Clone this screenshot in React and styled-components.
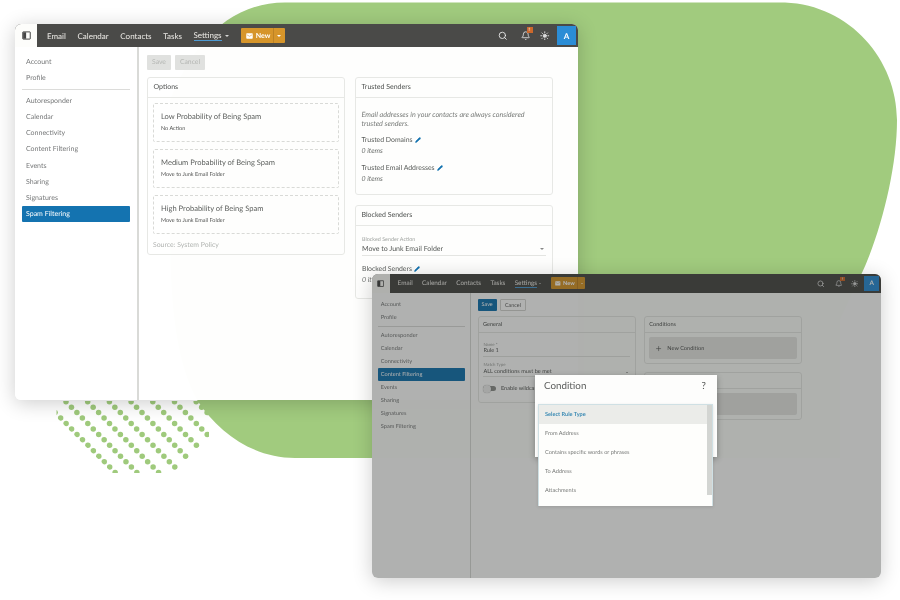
import React from 'react';
import styled, { createGlobalStyle } from 'styled-components';
import { Search, Bell, Sun, Plus, Pencil } from 'lucide-react';

const Global = createGlobalStyle`
  html, body { margin: 0; padding: 0; background: #fff; }
  body { font-family: Lato, "Open Sans", "Liberation Sans", sans-serif; text-rendering: geometricPrecision; }
`;

const Stage = styled.div`
  position: relative;
  width: 900px;
  height: 600px;
  overflow: hidden;
  background: #fff;
`;
const Backdrop = styled.svg`
  position: absolute;
  inset: 0;
`;

const Win = styled.div`
  --u: ${p => p.$u}px;
  position: absolute;
  left: ${p => p.$x}px;
  top: ${p => p.$y}px;
  width: ${p => p.$w}px;
  height: ${p => p.$h}px;
  border-radius: 6px;
  background: rgba(255, 255, 255, 0.985);
  box-shadow: 0 3px 20px rgba(0, 0, 0, 0.2);
  display: flex;
  flex-direction: column;
  filter: blur(0.3px);
`;
const Chrome = styled.div`
  display: flex;
  flex-direction: column;
  flex: 1;
  min-height: 0;
  overflow: hidden;
  border-radius: 6px;
`;
const TopBar = styled.header`
  flex: none;
  height: calc(var(--u) * 23.4);
  display: flex;
  align-items: center;
  background: #4a4a48;
  color: #f2f2f0;
`;
const PanelCell = styled.div`
  flex: none;
  width: calc(var(--u) * 22);
  height: 100%;
  background: #fdfdfb;
  display: flex;
  align-items: center;
  justify-content: center;
  svg { width: calc(var(--u) * 9); height: calc(var(--u) * 9); }
`;
const Nav = styled.nav`
  display: flex;
  align-items: center;
  gap: calc(var(--u) * 11.6);
  padding-left: calc(var(--u) * 10);
  font-size: calc(var(--u) * 8);
`;
const NavLink = styled.span`
  color: #eceae6;
  ${p => p.$on && `
    border-bottom: 1px solid #4d9ad2;
    line-height: 1.15;
    margin-top: 1px;
  `}
`;
const Caret = styled.i`
  display: inline-block;
  border-left: calc(var(--u) * 2) solid transparent;
  border-right: calc(var(--u) * 2) solid transparent;
  border-top: calc(var(--u) * 2) solid ${p => p.$c || '#d8d8d6'};
  vertical-align: middle;
`;
const SettingsItem = styled.span`
  display: flex;
  align-items: center;
  gap: calc(var(--u) * 3);
`;
const NewBtn = styled.div`
  margin-left: calc(var(--u) * 0.5);
  display: flex;
  align-items: stretch;
  height: calc(var(--u) * 15);
  background: #d6952a;
  border-radius: 1px;
  color: #fff;
  font-weight: 700;
  font-size: calc(var(--u) * 7);
`;
const NewMain = styled.span`
  display: flex;
  align-items: center;
  gap: calc(var(--u) * 3);
  padding: 0 calc(var(--u) * 2.5) 0 calc(var(--u) * 5);
  svg { width: calc(var(--u) * 7); height: calc(var(--u) * 6); }
`;
const NewDrop = styled.span`
  display: flex;
  align-items: center;
  padding: 0 calc(var(--u) * 3.5);
  border-left: 1px solid #bd8224;
`;
const Tools = styled.div`
  margin-left: auto;
  display: flex;
  align-items: center;
  gap: calc(var(--u) * 10);
  padding-right: calc(var(--u) * 2);
  color: #eee;
  svg { display: block; }
`;
const BellWrap = styled.span`
  position: relative;
  display: block;
  margin-left: calc(var(--u) * 3);
`;
const Badge = styled.b`
  position: absolute;
  top: calc(var(--u) * -3.5);
  right: calc(var(--u) * -2.5);
  width: calc(var(--u) * 6);
  height: calc(var(--u) * 5.5);
  background: #cc682c;
  color: #fff;
  font-size: calc(var(--u) * 4.5);
  line-height: calc(var(--u) * 5.5);
  text-align: center;
`;
const Avatar = styled.div`
  width: calc(var(--u) * 19);
  height: calc(var(--u) * 19);
  margin-left: calc(var(--u) * -2.5);
  background: #2b8dd6;
  color: #fff;
  font-weight: 700;
  font-size: calc(var(--u) * 8);
  display: flex;
  align-items: center;
  justify-content: center;
`;
const Body = styled.div`
  flex: 1;
  display: flex;
  min-height: 0;
`;
const Side = styled.aside`
  flex: none;
  width: calc(var(--u) * 124);
  box-sizing: border-box;
  padding: calc(var(--u) * 6.7) calc(var(--u) * 7);
  border-right: calc(var(--u) * 2) solid #d9dad7;
  font-size: calc(var(--u) * 7);
`;
const SideItem = styled.div`
  height: calc(var(--u) * 16.2);
  line-height: calc(var(--u) * 17.8);
  padding-left: calc(var(--u) * 4);
  color: ${p => (p.$on ? '#fff' : '#77797a')};
  background: ${p => (p.$on ? '#1473b0' : 'transparent')};
  border-radius: 1px;
`;
const SideRule = styled.hr`
  border: 0;
  border-top: 1px solid #dcdcda;
  margin: calc(var(--u) * 3) 0 calc(var(--u) * 2.4);
`;
const Main = styled.main`
  flex: 1;
  min-width: 0;
  padding: calc(var(--u) * 7.7) calc(var(--u) * 8);
`;
const Actions = styled.div`
  display: flex;
  gap: calc(var(--u) * 4);
  margin-bottom: calc(var(--u) * 7);
`;
const ActBtn = styled.button`
  all: unset;
  box-sizing: border-box;
  height: calc(var(--u) * 15);
  padding: 0 calc(var(--u) * 5);
  font-size: calc(var(--u) * 6.8);
  line-height: calc(var(--u) * 15);
  border-radius: 1px;
  color: ${p => ({ off: '#b4b6b3', primary: '#fff', plain: '#666' })[p.$kind]};
  background: ${p => ({ off: '#e0e1df', primary: '#1473b0', plain: 'transparent' })[p.$kind]};
  border: ${p => (p.$kind === 'plain' ? '1px solid #d4d4d2' : '0')};
`;
const Columns = styled.div`
  display: grid;
  grid-template-columns: calc(var(--u) * 197.5) calc(var(--u) * 197.5);
  gap: calc(var(--u) * 10.5);
  align-items: start;
`;
const Stack = styled.div`
  display: flex;
  flex-direction: column;
  gap: calc(var(--u) * 10.5);
`;
const Card = styled.section`
  border: 1px solid #e7e8e5;
  border-radius: 3px;
  box-sizing: border-box;
`;
const CardHead = styled.h3`
  margin: 0;
  box-sizing: border-box;
  height: calc(var(--u) * 20);
  line-height: calc(var(--u) * 19);
  padding-left: calc(var(--u) * 5.5);
  font-size: calc(var(--u) * 7);
  font-weight: 400;
  color: #4f5150;
  border-bottom: 1px solid #e7e8e5;
`;
const OptionsBody = styled.div`
  padding: calc(var(--u) * 5) calc(var(--u) * 5) calc(var(--u) * 3.5);
`;
const RuleBox = styled.div`
  box-sizing: border-box;
  height: calc(var(--u) * 39);
  padding: calc(var(--u) * 6.5) calc(var(--u) * 7);
  margin-bottom: calc(var(--u) * 7);
  border: 1px dashed #d9dad7;
  border-radius: 2px;
`;
const RuleTitle = styled.div`
  font-size: calc(var(--u) * 7.55);
  line-height: calc(var(--u) * 12);
  color: #5d5f5e;
`;
const RuleSub = styled.div`
  margin-top: calc(var(--u) * 1);
  font-size: calc(var(--u) * 5.5);
  line-height: calc(var(--u) * 10);
  color: #555;
`;
const Source = styled.div`
  margin-top: calc(var(--u) * -1);
  font-size: calc(var(--u) * 6.9);
  line-height: calc(var(--u) * 10);
  color: #b0b2b0;
`;
const TrustBody = styled.div`
  padding: calc(var(--u) * 11.5) calc(var(--u) * 5.5) calc(var(--u) * 9);
`;
const Note = styled.p`
  margin: 0;
  font-style: italic;
  font-size: calc(var(--u) * 7.2);
  line-height: calc(var(--u) * 9);
  color: #797b7a;
`;
const ListLabel = styled.div`
  margin-top: calc(var(--u) * ${p => p.$mt ?? 6});
  display: flex;
  align-items: center;
  gap: calc(var(--u) * 2.5);
  font-size: calc(var(--u) * 6.9);
  line-height: calc(var(--u) * 11);
  color: #5a5c5b;
  svg { width: calc(var(--u) * 6); height: calc(var(--u) * 6); }
`;
const Items = styled.div`
  font-style: italic;
  font-size: calc(var(--u) * 7);
  line-height: calc(var(--u) * 11);
  color: #6d6f6e;
`;
const FormBody = styled.div`
  padding: calc(var(--u) * 10.5) calc(var(--u) * 6) calc(var(--u) * 12);
`;
const Field = styled.div`
  margin-bottom: calc(var(--u) * 6);
  border-bottom: 1px solid #e4e5e2;
  position: relative;
`;
const FieldLabel = styled.div`
  font-size: calc(var(--u) * 5.4);
  line-height: calc(var(--u) * 7);
  color: #a3a5a3;
`;
const FieldValue = styled.div`
  display: flex;
  align-items: center;
  justify-content: space-between;
  font-size: calc(var(--u) * 7);
  line-height: calc(var(--u) * 11);
  color: #565857;
  padding-right: calc(var(--u) * 2);
`;
const ToggleRow = styled.div`
  margin-top: calc(var(--u) * 9);
  display: flex;
  align-items: center;
  gap: calc(var(--u) * 6);
  font-size: calc(var(--u) * 7);
  line-height: calc(var(--u) * 10);
  color: #565857;
  white-space: nowrap;
`;
const Toggle = styled.span`
  position: relative;
  width: calc(var(--u) * 16);
  height: calc(var(--u) * 7);
  border-radius: calc(var(--u) * 4);
  background: #8f918e;
  &::before {
    content: '';
    position: absolute;
    left: calc(var(--u) * -1);
    top: calc(var(--u) * -1.5);
    width: calc(var(--u) * 10);
    height: calc(var(--u) * 10);
    border-radius: 50%;
    background: #eee;
    box-shadow: 0 0 1px rgba(0, 0, 0, 0.4);
  }
`;
const AddBody = styled.div`
  padding: calc(var(--u) * 5);
`;
const AddBtn = styled.div`
  height: calc(var(--u) * 27);
  border-radius: 2px;
  background: #e6e7e4;
  display: flex;
  align-items: center;
  gap: calc(var(--u) * 6);
  padding-left: calc(var(--u) * 8);
  font-size: calc(var(--u) * 7);
  color: #555;
  svg { width: calc(var(--u) * 9); height: calc(var(--u) * 9); }
`;
const Dim = styled.div`
  position: absolute;
  inset: 0;
  background: rgba(28, 32, 28, 0.35);
  border-radius: 6px;
`;
const Modal = styled.div`
  position: absolute;
  left: 163px;
  top: 101px;
  width: 182px;
  height: 82px;
  background: #fdfdfc;
  box-shadow: 0 2px 6px rgba(0, 0, 0, 0.3);
`;
const ModalHead = styled.div`
  display: flex;
  align-items: center;
  justify-content: space-between;
  padding: 0 11px 0 9px;
  height: 22px;
  font-size: 9.8px;
  color: #5a5c5b;
`;
const Select = styled.div`
  position: absolute;
  left: 3px;
  top: 29px;
  width: 175px;
  height: 102px;
  background: #fefefc;
  border: 1px solid #cfe0e4;
  border-bottom: 0;
  box-sizing: border-box;
  box-shadow: 0 1px 3px rgba(0, 0, 0, 0.12);
  overflow: hidden;
`;
const Scroll = styled.div`
  position: absolute;
  right: 0;
  top: 0;
  width: 5px;
  height: 90px;
  background: #d3d5d2;
`;
const Opt = styled.div`
  height: 19px;
  line-height: 19px;
  padding-left: 6px;
  font-size: 5.6px;
  color: ${p => (p.$on ? '#3c8bb4' : '#777977')};
  font-weight: ${p => (p.$on ? 700 : 400)};
  background: ${p => (p.$on ? '#ebecE9' : 'transparent')};
`;

const PanelIcon = () => (
  <svg viewBox="0 0 12 12">
    <rect x="1" y="1.2" width="10" height="9.6" rx="0.5" fill="none" stroke="#444" strokeWidth="1.3" />
    <rect x="1.5" y="1.7" width="4" height="8.6" fill="#444" />
  </svg>
);
const MailIcon = () => (
  <svg viewBox="0 0 14 12">
    <rect x="0.5" y="0.5" width="13" height="11" rx="1.5" fill="#fff" />
    <path d="M1.5 3.5 7 6.5l5.5-3" fill="none" stroke="#d6952a" strokeWidth="1.1" />
  </svg>
);
const Edit = () => <Pencil fill="#1473b0" color="#1473b0" strokeWidth={2} />;

const pri = ['Account', 'Profile'];
const sec = ['Autoresponder', 'Calendar', 'Connectivity', 'Content Filtering', 'Events', 'Sharing', 'Signatures', 'Spam Filtering'];

function AppWindow({ x, y, w, h, u, active, actions, children, overlay }) {
  const ic = 9.5 * u;
  return (
    <Win $x={x} $y={y} $w={w} $h={h} $u={u}>
      <Chrome>
        <TopBar>
          <PanelCell><PanelIcon /></PanelCell>
          <Nav>
            <NavLink>Email</NavLink>
            <NavLink>Calendar</NavLink>
            <NavLink>Contacts</NavLink>
            <NavLink>Tasks</NavLink>
            <SettingsItem><NavLink $on>Settings</NavLink><Caret /></SettingsItem>
            <NewBtn>
              <NewMain><MailIcon />New</NewMain>
              <NewDrop><Caret $c="#fff" /></NewDrop>
            </NewBtn>
          </Nav>
          <Tools>
            <Search size={ic} strokeWidth={2.2} />
            <BellWrap><Bell size={ic} strokeWidth={2} /><Badge>!</Badge></BellWrap>
            <Sun size={ic} strokeWidth={2.4} fill="#ddd" color="#ddd" />
            <Avatar>A</Avatar>
          </Tools>
        </TopBar>
        <Body>
          <Side>
            {pri.map(t => <SideItem key={t}>{t}</SideItem>)}
            <SideRule />
            {sec.map(t => <SideItem key={t} $on={t === active}>{t}</SideItem>)}
          </Side>
          <Main>
            <Actions>{actions}</Actions>
            <Columns>{children}</Columns>
          </Main>
        </Body>
      </Chrome>
      {overlay}
    </Win>
  );
}

const dots = [];
for (let i = -30; i < 45; i++) {
  for (let j = -8; j < 14; j++) {
    dots.push([66 + i * 5.45 + j * 21.7, 401.7 + i * 5.45]);
  }
}

export default function App() {
  return (
    <Stage>
      <Global />
      <Backdrop viewBox="0 0 900 600" width="900" height="600">
        <defs>
          <clipPath id="dotClip">
            <polygon points="56.5,401 56.5,417.5 112,473 173,473 209,437 209,401" />
          </clipPath>
        </defs>
        <g clipPath="url(#dotClip)" fill="#9fca7c">
          {dots.map(([cx, cy], k) => <circle key={k} cx={cx} cy={cy} r="2.75" />)}
        </g>
        <path
          fill="#a1cb7e"
          d="M285 2.5 L785 2.5 C850 5 897 60 897 120 C897 170 880 235 861 275 L840 320 L840 458 L295 458 C255 458 220 435 197 400 C175 360 170 300 170 230 L170 100 C190 50 225 2.5 285 2.5 Z"
        />
      </Backdrop>

      <AppWindow
        x={15} y={24} w={563} h={376} u={1} active="Spam Filtering"
        actions={<><ActBtn $kind="off">Save</ActBtn><ActBtn $kind="off">Cancel</ActBtn></>}
      >
        <Card>
          <CardHead>Options</CardHead>
          <OptionsBody>
            <RuleBox><RuleTitle>Low Probability of Being Spam</RuleTitle><RuleSub>No Action</RuleSub></RuleBox>
            <RuleBox><RuleTitle>Medium Probability of Being Spam</RuleTitle><RuleSub>Move to Junk Email Folder</RuleSub></RuleBox>
            <RuleBox><RuleTitle>High Probability of Being Spam</RuleTitle><RuleSub>Move to Junk Email Folder</RuleSub></RuleBox>
            <Source>Source: System Policy</Source>
          </OptionsBody>
        </Card>
        <Stack>
          <Card>
            <CardHead>Trusted Senders</CardHead>
            <TrustBody>
              <Note>Email addresses in your contacts are always considered trusted senders.</Note>
              <ListLabel $mt={7}>Trusted Domains <Edit /></ListLabel>
              <Items>0 items</Items>
              <ListLabel>Trusted Email Addresses <Edit /></ListLabel>
              <Items>0 items</Items>
            </TrustBody>
          </Card>
          <Card>
            <CardHead>Blocked Senders</CardHead>
            <FormBody>
              <Field>
                <FieldLabel>Blocked Sender Action</FieldLabel>
                <FieldValue>Move to Junk Email Folder <Caret $c="#888" /></FieldValue>
              </Field>
              <ListLabel $mt={8}>Blocked Senders <Edit /></ListLabel>
              <Items>0 items</Items>
            </FormBody>
          </Card>
        </Stack>
      </AppWindow>

      <AppWindow
        x={372} y={274} w={509} h={304} u={0.8} active="Content Filtering"
        actions={<><ActBtn $kind="primary">Save</ActBtn><ActBtn $kind="plain">Cancel</ActBtn></>}
        overlay={
          <>
            <Dim />
            <Modal>
              <ModalHead><span>Condition</span><span>?</span></ModalHead>
              <Select>
                <Scroll />
                <Opt $on>Select Rule Type</Opt>
                <Opt>From Address</Opt>
                <Opt>Contains specific words or phrases</Opt>
                <Opt>To Address</Opt>
                <Opt>Attachments</Opt>
              </Select>
            </Modal>
          </>
        }
      >
        <Card>
          <CardHead>General</CardHead>
          <FormBody>
            <Field>
              <FieldLabel>Name *</FieldLabel>
              <FieldValue>Rule 1</FieldValue>
            </Field>
            <Field>
              <FieldLabel>Match Type</FieldLabel>
              <FieldValue>ALL conditions must be met <Caret $c="#666" /></FieldValue>
            </Field>
            <ToggleRow><Toggle />Enable wildcards</ToggleRow>
          </FormBody>
        </Card>
        <Stack>
          <Card>
            <CardHead>Conditions</CardHead>
            <AddBody><AddBtn><Plus />New Condition</AddBtn></AddBody>
          </Card>
          <Card>
            <CardHead>Actions</CardHead>
            <AddBody><AddBtn><Plus />New Action</AddBtn></AddBody>
          </Card>
        </Stack>
      </AppWindow>
    </Stage>
  );
}
